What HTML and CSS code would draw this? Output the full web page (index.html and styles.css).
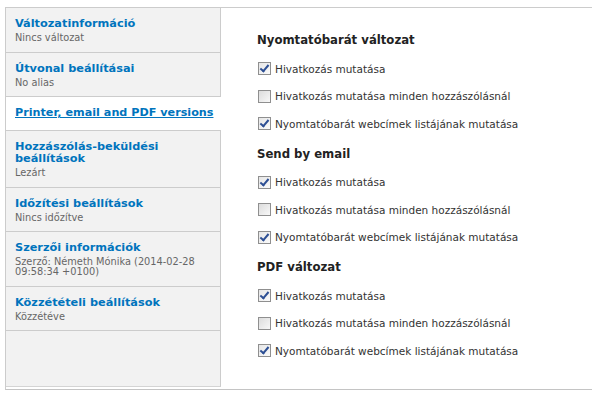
FILE: index.html
```html
<!DOCTYPE html>
<html lang="hu">
<head>
<meta charset="utf-8">
<link rel="stylesheet" href="styles.css">
</head>
<body>
<div class="tabs">
  <ul class="menu">
    <li class="item"><a class="title" href="#">Változatinformáció</a><span class="sum">Nincs változat</span></li>
    <li class="item"><a class="title" href="#">Útvonal beállításai</a><span class="sum">No alias</span></li>
    <li class="item active"><a class="title" href="#">Printer, email and PDF versions</a></li>
    <li class="item"><a class="title" href="#">Hozzászólás-beküldési beállítások</a><span class="sum">Lezárt</span></li>
    <li class="item"><a class="title" href="#">Időzítési beállítások</a><span class="sum">Nincs időzítve</span></li>
    <li class="item"><a class="title" href="#">Szerzői információk</a><span class="sum">Szerző: Németh Mónika (2014-02-28 09:58:34 +0100)</span></li>
    <li class="item"><a class="title" href="#">Közzétételi beállítások</a><span class="sum">Közzétéve</span></li>
  </ul>
  <div class="pane">
    <section class="group">
      <h3 class="gtitle">Nyomtatóbarát változat</h3>
      <label class="opt"><span class="cb on"></span>Hivatkozás mutatása</label>
      <label class="opt"><span class="cb"></span>Hivatkozás mutatása minden hozzászólásnál</label>
      <label class="opt"><span class="cb on"></span>Nyomtatóbarát webcímek listájának mutatása</label>
    </section>
    <section class="group">
      <h3 class="gtitle">Send by email</h3>
      <label class="opt"><span class="cb on"></span>Hivatkozás mutatása</label>
      <label class="opt"><span class="cb"></span>Hivatkozás mutatása minden hozzászólásnál</label>
      <label class="opt"><span class="cb on"></span>Nyomtatóbarát webcímek listájának mutatása</label>
    </section>
    <section class="group">
      <h3 class="gtitle">PDF változat</h3>
      <label class="opt"><span class="cb on"></span>Hivatkozás mutatása</label>
      <label class="opt"><span class="cb"></span>Hivatkozás mutatása minden hozzászólásnál</label>
      <label class="opt"><span class="cb on"></span>Nyomtatóbarát webcímek listájának mutatása</label>
    </section>
  </div>
</div>
</body>
</html>
```
FILE: styles.css
```css
html, body { margin: 0; padding: 0; background: #fff; }
body {
  font-family: "DejaVu Sans", Verdana, sans-serif;
  color: #333;
  padding: 7px 0 0 5px;
}
.tabs {
  display: flex;
  border-top: 1px solid #ccc;
  border-left: 1px solid #ccc;
  border-bottom: 1px solid #c4c4c4;
  height: 383px;
  box-sizing: border-box;
}
.menu {
  list-style: none;
  margin: 0;
  padding: 0;
  width: 214px;
  flex: none;
  background: #f2f2f2;
  border-right: 1px solid #ccc;
  height: 378px;
  border-bottom: 1px solid #d4d4d4;
}
.item {
  display: flex;
  flex-direction: column;
  padding: 10px 9px 8.5px 9px;
  border-bottom: 1px solid #ccc;
}
.item.active {
  background: #fff;
  margin-right: -1px;
  padding-top: 9px;
  padding-bottom: 10px;
}
.title {
  color: #0074bd;
  font-weight: bold;
  font-size: 11.3px;
  line-height: 12px;
  text-decoration: none;
}
.active .title {
  text-decoration: underline;
  font-size: 11.2px;
  line-height: 14px;
  white-space: nowrap;
}
.sum {
  color: #666;
  font-size: 9.8px;
  line-height: 10px;
  margin-top: 3px;
}
.pane {
  flex: 1;
  padding: 24px 0 0 36px;
}
.group { margin-bottom: 8px; }
.gtitle {
  margin: 0 0 7px 0;
  font-size: 11.7px;
  line-height: 16px;
  font-weight: bold;
  color: #222;
}
.opt {
  display: flex;
  align-items: center;
  font-size: 10.5px;
  line-height: 14px;
  color: #333;
  height: 27.5px;
}
.cb {
  width: 11px;
  height: 11px;
  border: 1px solid #8f8f8f;
  background: linear-gradient(135deg, #dcdcdc, #f8f8f8);
  margin: 0 4px 0 1px;
  flex: none;
  position: relative;
}
.cb.on {
  background: linear-gradient(135deg, #e6e6e6, #fafafa);
}
.cb.on::after {
  content: "";
  position: absolute;
  left: 3px;
  top: 0px;
  width: 3px;
  height: 7px;
  border-right: 2px solid #2d4f94;
  border-bottom: 2px solid #2d4f94;
  transform: rotate(40deg);
}
```
